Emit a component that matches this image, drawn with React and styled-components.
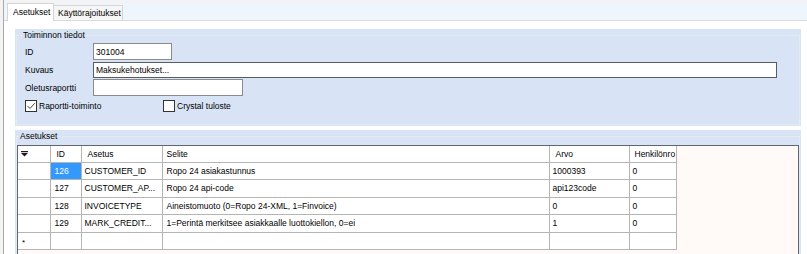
import React from 'react';
import styled, { createGlobalStyle } from 'styled-components';

const Global = createGlobalStyle`
  html, body { margin: 0; padding: 0; background: #f3f3f3; }
  body { font-family: "Liberation Sans", Arial, sans-serif; font-size: 8.5px; color: #000; }
  * { box-sizing: border-box; }
`;

const Window = styled.div`
  width: 807px;
  height: 254px;
  display: flex;
  overflow: hidden;
  background: #f3f3f3;
`;

const Gutter = styled.div`
  width: 4px;
  flex: none;
  border-right: 1px solid #a9a9a9;
`;

const Main = styled.div`
  flex: 1;
  display: flex;
  flex-direction: column;
  min-width: 0;
`;

const TabStrip = styled.div`
  margin-top: 3px;
  height: 18px;
  flex: none;
  display: flex;
  align-items: flex-end;
  padding-left: 3px;
  background: #eef5fd;
  border-bottom: 1px solid #d9d9d9;
`;

const Tab = styled.div`
  display: flex;
  align-items: center;
  height: ${p => (p.$active ? '18px' : '15px')};
  margin-bottom: ${p => (p.$active ? '-1px' : '0')};
  padding: ${p => (p.$active ? '0 0 2px 5px' : '0 0 0 4px')};
  width: ${p => p.$w}px;
  background: ${p => (p.$active ? '#ffffff' : '#f6f6f6')};
  border: 1px solid #d5d5d5;
  border-bottom: none;
  border-left: ${p => (p.$active ? '1px solid #d5d5d5' : 'none')};
  white-space: nowrap;
  position: relative;
  z-index: ${p => (p.$active ? 1 : 0)};
`;

const Page = styled.div`
  flex: 1;
  background: #ffffff;
  padding: 8px 6px 0 11px;
  display: flex;
  flex-direction: column;
  gap: 4px;
  min-height: 0;
`;

const Panel = styled.div`
  background: #d8e4f6;
  padding: 1px;
  height: ${p => p.$h}px;
  flex: none;
  display: flex;
`;

const Group = styled.fieldset`
  margin: 0;
  padding: 0;
  flex: 1;
  min-width: 0;
  border: 1px solid #e5e9f0;
  display: flex;
  flex-direction: column;
`;

const Legend = styled.legend`
  margin-left: ${p => p.$ml}px;
  padding: 0 1px;
  height: 11px;
  line-height: 11px;
`;

const Form = styled.div`
  display: grid;
  grid-template-columns: 68px 1fr;
  grid-auto-rows: 17px;
  row-gap: 1px;
  padding: 2px 0 0 8px;
  align-items: center;
`;

const Label = styled.div`
  white-space: nowrap;
`;

const Input = styled.div`
  width: ${p => p.$w}px;
  height: ${p => (p.$tall ? 17 : 16)}px;
  background: #ffffff;
  border: 1px solid ${p => (p.$focus ? '#565c63' : '#8a8a8a')};
  padding-left: 2px;
  display: flex;
  align-items: center;
  white-space: nowrap;
`;

const CheckRow = styled.div`
  display: flex;
  padding: 4px 0 0 8px;
`;

const CheckItem = styled.div`
  display: flex;
  align-items: center;
  gap: 2px;
  width: ${p => p.$w || 'auto'};
`;

const Box = styled.div`
  width: 12px;
  height: 12px;
  background: #ffffff;
  border: 1px solid #333;
  display: flex;
  align-items: center;
  justify-content: center;
`;

const GridWrap = styled.div`
  margin-top: 3px;
  flex: 1;
  background: #fffaf8;
  border: 1px solid #5f666f;
  min-height: 0;
`;

const Table = styled.table`
  border-collapse: collapse;
  table-layout: fixed;
  width: 658px;
`;

const Row = styled.tr`
  height: ${p => p.$h}px;
`;

const Th = styled.th`
  padding: 0 0 0 ${p => p.$pl ?? 6}px;
  text-align: left;
  font-weight: normal;
  background: #ffffff;
  border-right: 1px solid #b5b5b5;
  border-bottom: 1px solid #b5b5b5;
  white-space: nowrap;
  overflow: hidden;
  vertical-align: middle;
`;

const Td = styled.td`
  padding: 0 0 0 ${p => p.$pl ?? 3}px;
  background: ${p => (p.$sel ? '#3399ff' : '#ffffff')};
  color: ${p => (p.$sel ? '#ffffff' : '#000')};
  border-right: 1px solid #b5b5b5;
  border-bottom: 1px solid #b5b5b5;
  white-space: nowrap;
  overflow: hidden;
  vertical-align: middle;
`;

const Star = styled.span`
  font-size: 8px;
  padding-left: 4px;
  position: relative;
  top: 1px;
`;

const Check = () => (
  <svg width="10" height="10" viewBox="0 0 10 10">
    <path d="M1.5 5 L4 7.5 L8.8 2.2" fill="none" stroke="#444" strokeWidth="1" />
  </svg>
);

const FilterIcon = () => (
  <svg width="7" height="6" viewBox="0 0 7 6" style={{ display: 'block', marginLeft: 3 }}>
    <rect x="0" y="0" width="7" height="1.2" fill="#1a1a1a" />
    <polygon points="0,2 7,2 3.5,5.6" fill="#1a1a1a" />
  </svg>
);

const rows = [
  { id: '126', key: 'CUSTOMER_ID', desc: 'Ropo 24 asiakastunnus', val: '1000393', hn: '0', sel: true },
  { id: '127', key: 'CUSTOMER_AP...', desc: 'Ropo 24 api-code', val: 'api123code', hn: '0' },
  { id: '128', key: 'INVOICETYPE', desc: 'Aineistomuoto (0=Ropo 24-XML, 1=Finvoice)', val: '0', hn: '0' },
  { id: '129', key: 'MARK_CREDIT...', desc: '1=Perintä merkitsee asiakkaalle luottokiellon, 0=ei', val: '1', hn: '0' },
];

const rowHeights = [17, 18, 17, 18, 17];

export default function App() {
  return (
    <>
      <Global />
      <Window>
        <Gutter />
        <Main>
          <TabStrip>
            <Tab $active $w={47}>Asetukset</Tab>
            <Tab $w={69}>Käyttörajoitukset</Tab>
          </TabStrip>
          <Page>
            <Panel $h={97}>
              <Group>
                <Legend $ml={5}>Toiminnon tiedot</Legend>
                <Form>
                  <Label>ID</Label>
                  <Input $w={79} $tall>301004</Input>
                  <Label>Kuvaus</Label>
                  <Input $w={684} $focus>Maksukehotukset...</Input>
                  <Label>Oletusraportti</Label>
                  <Input $w={150} $tall></Input>
                </Form>
                <CheckRow>
                  <CheckItem $w="138px">
                    <Box><Check /></Box>
                    <span>Raportti-toiminto</span>
                  </CheckItem>
                  <CheckItem>
                    <Box />
                    <span>Crystal tuloste</span>
                  </CheckItem>
                </CheckRow>
              </Group>
            </Panel>
            <Panel $h={140}>
              <Group>
                <Legend $ml={2}>Asetukset</Legend>
                <GridWrap>
                  <Table>
                    <colgroup>
                      <col style={{ width: 32 }} />
                      <col style={{ width: 31 }} />
                      <col style={{ width: 81 }} />
                      <col style={{ width: 387 }} />
                      <col style={{ width: 80 }} />
                      <col style={{ width: 47 }} />
                    </colgroup>
                    <thead>
                      <Row $h={16}>
                        <Th $pl={0}><FilterIcon /></Th>
                        <Th>ID</Th>
                        <Th>Asetus</Th>
                        <Th $pl={4}>Selite</Th>
                        <Th>Arvo</Th>
                        <Th $pl={5}>Henkilönro</Th>
                      </Row>
                    </thead>
                    <tbody>
                      {rows.map((r, i) => (
                        <Row key={r.id} $h={rowHeights[i]}>
                          <Td />
                          <Td $sel={r.sel} $pl={4}>{r.id}</Td>
                          <Td>{r.key}</Td>
                          <Td $pl={4}>{r.desc}</Td>
                          <Td>{r.val}</Td>
                          <Td>{r.hn}</Td>
                        </Row>
                      ))}
                      <Row $h={rowHeights[4]}>
                        <Td $pl={0}><Star>*</Star></Td>
                        <Td />
                        <Td />
                        <Td />
                        <Td />
                        <Td />
                      </Row>
                    </tbody>
                  </Table>
                </GridWrap>
              </Group>
            </Panel>
          </Page>
        </Main>
      </Window>
    </>
  );
}
